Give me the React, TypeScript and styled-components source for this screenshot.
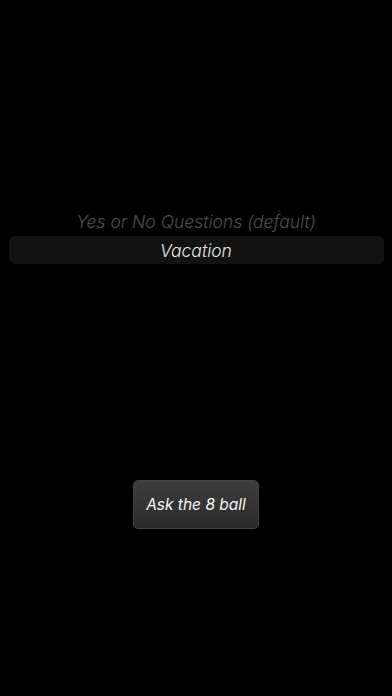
import styled, { createGlobalStyle } from "styled-components";

const GlobalStyle = createGlobalStyle`
  html, body {
    margin: 0;
    padding: 0;
    background: #000000;
  }
`;

const categories: string[] = ["Yes or No Questions (default)", "Vacation"];

const App: React.FC = () => {
  const selected = 1;
  return (
    <>
      <GlobalStyle />
      <Screen>
        <Picker>
          {categories.map((c, i) => (
            <PickerRow key={c} $active={i === selected}>
              {c}
            </PickerRow>
          ))}
        </Picker>
        <AskButton>Ask the 8 ball</AskButton>
      </Screen>
    </>
  );
};

const Screen = styled.div`
  width: 392px;
  height: 696px;
  background: #000000;
  display: flex;
  flex-direction: column;
  align-items: center;
  padding-top: 207px;
  box-sizing: border-box;
  font-family: "Inter", "Liberation Sans", sans-serif;
  font-style: italic;
`;

const Picker = styled.div`
  width: 375px;
  display: flex;
  flex-direction: column;
`;

const PickerRow = styled.div<{ $active: boolean }>`
  height: ${(p) => (p.$active ? "28px" : "29px")};
  display: flex;
  align-items: center;
  justify-content: center;
  font-size: 17.5px;
  font-weight: 350;
  color: ${(p) => (p.$active ? "#e8e8e8" : "#505050")};
  background: ${(p) => (p.$active ? "#121212" : "transparent")};
  border-radius: 6px;
`;

const AskButton = styled.button`
  margin-top: 216px;
  width: 126px;
  height: 49px;
  border: 1px solid #444444;
  border-radius: 5px;
  background: linear-gradient(to bottom, #3d3d3d 0%, #2b2b2b 100%);
  color: #f4f4f4;
  font-family: "Inter", "Liberation Sans", sans-serif;
  font-style: italic;
  font-weight: 400;
  font-size: 15.5px;
  padding: 0;
  cursor: pointer;
`;

export default App;
